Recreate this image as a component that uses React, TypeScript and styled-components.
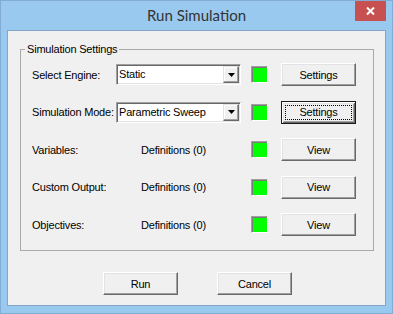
import React from "react";
import styled, { createGlobalStyle, css } from "styled-components";

const GlobalStyle = createGlobalStyle`
  html, body { margin: 0; padding: 0; background: #ffffff; }
  body {
    font-family: "Liberation Sans", Arial, sans-serif;
    font-size: 11px;
    letter-spacing: -0.2px;
    color: #000;
  }
  * { box-sizing: border-box; }
`;

const Window = styled.div`
  width: 393px;
  height: 314px;
  background: #99c9ef;
  border: 1px solid #82acd6;
  padding: 0 6px 7px;
  display: flex;
  flex-direction: column;
`;

const TitleBar = styled.div`
  height: 29px;
  flex: none;
  display: grid;
  grid-template-columns: 1fr auto 1fr;
  align-items: start;
`;

const Title = styled.h1`
  grid-column: 2;
  margin: 0;
  font-family: Lato, "Open Sans", sans-serif;
  font-weight: 400;
  font-size: 15px;
  line-height: 29px;
  letter-spacing: 0;
  color: #333333;
`;

const CloseButton = styled.button`
  grid-column: 3;
  justify-self: end;
  width: 31px;
  height: 20px;
  padding: 0;
  border: none;
  background: #c75050;
  display: flex;
  align-items: center;
  justify-content: center;
`;

const Client = styled.div`
  flex: 1;
  background: #f0f0f0;
  border: 1px solid #83a5c7;
  padding: 12px 11px 10px 12px;
  display: flex;
  flex-direction: column;
`;

const GroupBox = styled.fieldset`
  margin: 0;
  padding: 0;
  min-width: 0;
  border: 1px solid #a9a9a9;
`;

const Legend = styled.legend`
  margin-left: 4px;
  padding: 0 2px;
  line-height: 13px;
`;

const Rows = styled.div`
  display: grid;
  grid-auto-rows: 37.5px;
  padding: 0 0 6.5px 11px;
`;

const Row = styled.div`
  display: flex;
  align-items: center;
`;

const Label = styled.span`
  width: 84px;
  flex: none;
  white-space: nowrap;
`;

const Combo = styled.div`
  width: 125px;
  height: 21px;
  flex: none;
  display: flex;
  background: #ffffff;
  border: 1px solid;
  border-color: #a0a0a0 #ffffff #ffffff #a0a0a0;
  box-shadow: inset 1px 1px 0 #696969, inset -1px -1px 0 #e3e3e3;
  padding: 1px;
`;

const ComboValue = styled.span`
  flex: 1;
  padding-left: 1px;
  line-height: 17px;
  white-space: nowrap;
  overflow: hidden;
`;

const raised = css`
  background: #f0f0f0;
  border: 1px solid;
  border-color: #ffffff #696969 #696969 #ffffff;
  box-shadow: inset -1px -1px 0 #a0a0a0, inset 1px 1px 0 #e3e3e3;
`;

const DropButton = styled.span`
  ${raised};
  width: 16px;
  height: 17px;
  flex: none;
  display: flex;
  align-items: center;
  justify-content: center;
  border-color: #e3e3e3 #696969 #696969 #e3e3e3;
  box-shadow: inset -1px -1px 0 #a0a0a0, inset 1px 1px 0 #ffffff;
`;

const Definitions = styled.span`
  width: 125px;
  flex: none;
  padding-left: 25px;
  white-space: nowrap;
`;

const Indicator = styled.span`
  width: 17px;
  height: 17px;
  flex: none;
  margin-left: 10px;
  background: #00ff00;
  border: 1px solid;
  border-color: #a0a0a0 #ffffff #ffffff #a0a0a0;
  box-shadow: inset 1px 1px 0 #7a7a7a;
`;

const Button = styled.button<{ $primary?: boolean; $inRow?: boolean }>`
  ${raised};
  position: relative;
  width: 75px;
  height: 23px;
  flex: none;
  margin: 0 0 0 ${(p) => (p.$inRow ? "13px" : "0")};
  padding: 0;
  font-family: inherit;
  font-size: 11px;
  letter-spacing: -0.2px;
  color: #000;
  ${(p) =>
    p.$primary &&
    css`
      border: 1px solid #1a1a1a;
      box-shadow: inset 1px 1px 0 #ffffff, inset -1px -1px 0 #696969,
        inset 2px 2px 0 #e3e3e3, inset -2px -2px 0 #a0a0a0;
      &::after {
        content: "";
        position: absolute;
        inset: 3px;
        border: 1px dotted #000;
      }
    `}
`;

const ButtonBar = styled.div`
  display: flex;
  justify-content: center;
  gap: 39px;
  margin-top: 21px;
  padding-left: 1px;
`;

const Arrow = () => (
  <svg width="7" height="4" viewBox="0 0 7 4">
    <polygon points="0,0 7,0 3.5,4" fill="#000" />
  </svg>
);

const CloseIcon = () => (
  <svg width="9" height="8" viewBox="0 0 9 8">
    <path d="M1 0.5 L8 7.5 M8 0.5 L1 7.5" stroke="#fff" strokeWidth="2" />
  </svg>
);

type RowSpec =
  | { kind: "combo"; label: string; value: string; action: string; primary?: boolean }
  | { kind: "defs"; label: string; count: number; action: string };

const rows: RowSpec[] = [
  { kind: "combo", label: "Select Engine:", value: "Static", action: "Settings" },
  { kind: "combo", label: "Simulation Mode:", value: "Parametric Sweep", action: "Settings", primary: true },
  { kind: "defs", label: "Variables:", count: 0, action: "View" },
  { kind: "defs", label: "Custom Output:", count: 0, action: "View" },
  { kind: "defs", label: "Objectives:", count: 0, action: "View" },
];

export default function App() {
  return (
    <>
      <GlobalStyle />
      <Window>
        <TitleBar>
          <Title>Run Simulation</Title>
          <CloseButton aria-label="Close">
            <CloseIcon />
          </CloseButton>
        </TitleBar>
        <Client>
          <GroupBox>
            <Legend>Simulation Settings</Legend>
            <Rows>
              {rows.map((r) => (
                <Row key={r.label}>
                  <Label>{r.label}</Label>
                  {r.kind === "combo" ? (
                    <Combo>
                      <ComboValue>{r.value}</ComboValue>
                      <DropButton>
                        <Arrow />
                      </DropButton>
                    </Combo>
                  ) : (
                    <Definitions>Definitions ({r.count})</Definitions>
                  )}
                  <Indicator />
                  <Button $inRow $primary={r.kind === "combo" && r.primary}>
                    {r.action}
                  </Button>
                </Row>
              ))}
            </Rows>
          </GroupBox>
          <ButtonBar>
            <Button>Run</Button>
            <Button>Cancel</Button>
          </ButtonBar>
        </Client>
      </Window>
    </>
  );
}
